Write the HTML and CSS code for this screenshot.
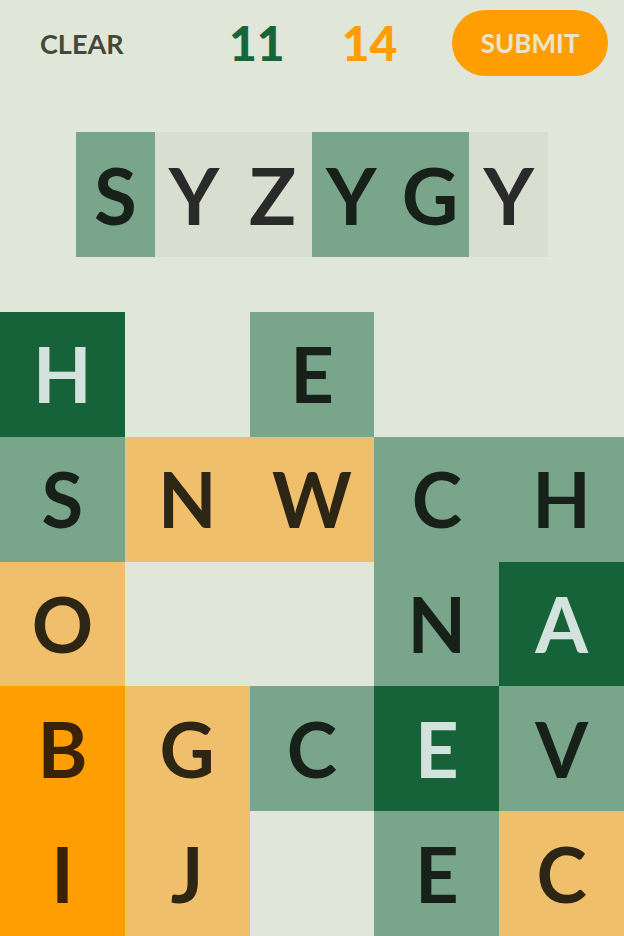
FILE: index.html
```html
<!DOCTYPE html>
<html>
<head>
<meta charset="utf-8">
<link rel="stylesheet" href="styles.css">
</head>
<body>
<div class="app">
  <header class="topbar">
    <div class="clear">CLEAR</div>
    <div class="scores">
      <span class="score score-green">11</span>
      <span class="score score-orange">14</span>
    </div>
    <button class="submit">SUBMIT</button>
  </header>

  <div class="word">
    <div class="wtile w-green">S</div>
    <div class="wtile w-light">Y</div>
    <div class="wtile w-light">Z</div>
    <div class="wtile w-green">Y</div>
    <div class="wtile w-green">G</div>
    <div class="wtile w-light">Y</div>
  </div>

  <div class="board">
    <div class="cell dark">H</div>
    <div class="cell empty"></div>
    <div class="cell mid">E</div>
    <div class="cell empty"></div>
    <div class="cell empty"></div>

    <div class="cell mid">S</div>
    <div class="cell lorange">N</div>
    <div class="cell lorange">W</div>
    <div class="cell mid">C</div>
    <div class="cell mid">H</div>

    <div class="cell lorange">O</div>
    <div class="cell empty"></div>
    <div class="cell empty"></div>
    <div class="cell mid">N</div>
    <div class="cell dark">A</div>

    <div class="cell orange">B</div>
    <div class="cell lorange">G</div>
    <div class="cell mid">C</div>
    <div class="cell dark">E</div>
    <div class="cell mid">V</div>

    <div class="cell orange">I</div>
    <div class="cell lorange">J</div>
    <div class="cell empty"></div>
    <div class="cell mid">E</div>
    <div class="cell lorange">C</div>
  </div>
</div>
</body>
</html>
```

FILE: styles.css
```css
* { box-sizing: border-box; }
html, body {
  margin: 0;
  padding: 0;
  background: #e0e6d8;
}
body {
  font-family: "Lato", "Open Sans", sans-serif;
  width: 624px;
  height: 936px;
  overflow: hidden;
}
.app {
  display: flex;
  flex-direction: column;
}
.topbar {
  display: flex;
  align-items: center;
  height: 76px;
  padding: 10px 16px 0 40px;
}
.clear {
  font-size: 27px;
  font-weight: 700;
  color: #45463c;
  width: 83px;
}
.scores {
  display: flex;
  gap: 57px;
  margin-left: 106px;
}
.score {
  font-size: 48px;
  font-weight: 900;
  line-height: 1;
}
.score-green { color: #19653b; }
.score-orange { color: #ff9e03; }
.submit {
  margin-left: auto;
  width: 156px;
  height: 66px;
  border: none;
  border-radius: 33px;
  background: #ff9e03;
  color: #ebe4cc;
  font-family: "Lato", "Open Sans", sans-serif;
  font-size: 26px;
  font-weight: 700;
  padding: 0;
}
.word {
  display: grid;
  grid-template-columns: repeat(6, 1fr);
  width: 472px;
  height: 125px;
  margin: 56px 0 0 76px;
}
.wtile {
  display: flex;
  align-items: center;
  justify-content: center;
  font-size: 78px;
  font-weight: 700;
  line-height: 1;
}
.w-green { background: #79a58a; color: #18201a; }
.w-light { background: #d8dfd0; color: #2a2a2a; }
.board {
  display: grid;
  grid-template-columns: repeat(5, 1fr);
  grid-template-rows: repeat(5, 1fr);
  width: 624px;
  height: 624px;
  margin-top: 55px;
}
.cell {
  display: flex;
  align-items: center;
  justify-content: center;
  font-size: 76px;
  font-weight: 700;
  line-height: 1;
}
.empty { background: transparent; }
.dark { background: #166339; color: #d3e2dc; }
.mid { background: #79a58a; color: #18201a; }
.lorange { background: #efbf6c; color: #2e2614; }
.orange { background: #ff9e03; color: #3a2208; }
```
